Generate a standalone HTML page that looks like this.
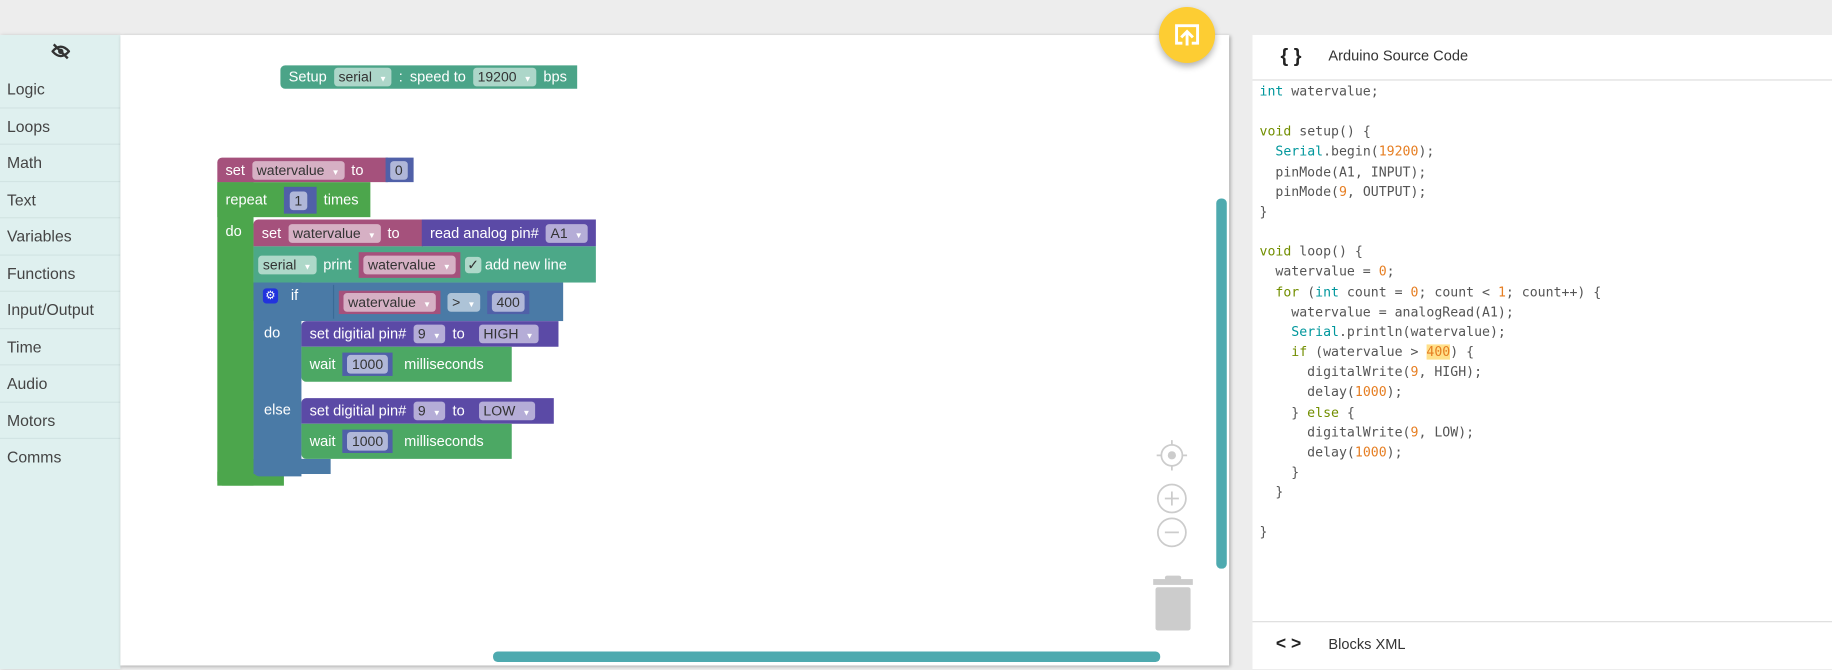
<!DOCTYPE html>
<html><head><meta charset="utf-8"><style>
html,body{margin:0;padding:0;width:1832px;height:669px;overflow:hidden;background:#ededed;}
#w{position:absolute;left:0;top:0;width:1568px;height:573px;transform:scale(1.16837,1.1675);transform-origin:0 0;font-family:"Liberation Sans",sans-serif;}
.abs{position:absolute;}
.side{left:0;top:30px;width:103px;height:543px;background:#dff0ef;box-shadow:1px 0 3px rgba(0,0,0,.15);}
.side div{height:31.5px;line-height:31.5px;padding-left:6px;font-size:13.5px;color:#444;border-bottom:1px solid #d2e4e3;box-sizing:border-box;}
.ws{left:103px;top:30px;width:949px;height:540px;background:#fff;box-shadow:1px 1px 3px rgba(0,0,0,.3);}
.b{position:absolute;color:#fff;font-size:12.5px;display:flex;align-items:center;box-sizing:border-box;padding-left:7px;white-space:nowrap;}
.b>span{margin-right:6px}
.f{background:rgba(255,255,255,.55);color:#333;border-radius:3px;padding:1px 4px;font-size:12px;}
.f i{font-style:normal;font-size:7px;color:#fff;margin-left:6px;}
.code{left:1072px;top:30px;width:496px;height:543px;background:#fff;}
pre{margin:0;position:absolute;left:6px;top:40px;font-family:"DejaVu Sans Mono","Liberation Mono",monospace;font-size:11.3px;line-height:17.15px;color:#555;}
.k{color:#00979c}.o{color:#728e00}.n{color:#e67e22}
</style></head><body><div id="w">
<div class="abs side">
<div style="height:31px;border:none;text-align:center;padding:0;line-height:28px">
<svg width="16" height="14" viewBox="0 0 16 14" style="vertical-align:middle"><path d="M1 7 Q8 -1 15 7 Q8 15 1 7Z" fill="none" stroke="#333" stroke-width="2"/><circle cx="8" cy="7" r="2.3" fill="#333"/><path d="M2 1 L14 13" stroke="#333" stroke-width="2"/></svg></div>
<div>Logic</div><div>Loops</div><div>Math</div><div>Text</div><div>Variables</div><div>Functions</div><div>Input/Output</div><div>Time</div><div>Audio</div><div>Motors</div><div style="border:none">Comms</div>
</div>
<div class="abs ws"></div>

<div class="b" style="left:240px;top:56px;width:254px;height:20px;background:#4ba488;border-radius:4px 0 0 4px">
<span>Setup</span><span class="f">serial<i>▼</i></span><span>:</span><span>speed to</span><span class="f">19200<i>▼</i></span><span>bps</span></div>

<div class="abs" style="left:186px;top:156px;width:131px;height:30px;background:#4ca64c"></div>
<div class="abs" style="left:186px;top:156px;width:31px;height:260px;background:#4ca64c;border-radius:0 0 0 5px"></div>
<div class="abs" style="left:186px;top:404px;width:57px;height:12px;background:#4ca64c"></div>
<div class="b" style="left:186px;top:160px;height:22px;background:none"><span>repeat</span></div>
<div class="b" style="left:243px;top:160px;width:28px;height:23px;background:#5060a8;padding-left:5px"><span class="f">1</span></div>
<div class="b" style="left:270px;top:160px;height:22px"><span>times</span></div>
<div class="b" style="left:186px;top:188px;height:20px"><span>do</span></div>

<div class="b" style="left:186px;top:135px;width:146px;height:21px;background:#a5517c;border-radius:4px 0 0 0"><span>set</span><span class="f">watervalue<i>▼</i></span><span>to</span></div>
<div class="b" style="left:330px;top:135px;width:24px;height:21px;background:#5060a8;padding-left:4px"><span class="f">0</span></div>

<div class="b" style="left:217px;top:188px;width:145px;height:23px;background:#a5517c;border-radius:4px 0 0 0"><span>set</span><span class="f">watervalue<i>▼</i></span><span>to</span></div>
<div class="b" style="left:361px;top:188px;width:149px;height:23px;background:#5b4aa6"><span>read analog pin#</span><span class="f">A1<i>▼</i></span></div>

<div class="b" style="left:217px;top:211px;width:293px;height:31px;background:#4ca888;padding-left:4px"><span class="f">serial<i>▼</i></span><span>print</span>
<span style="background:#a5517c;padding:4px 4px;margin-right:4px"><span class="f">watervalue<i>▼</i></span></span><span class="f" style="padding:0 2px">✓</span><span style="margin-left:-3px">add new line</span></div>

<div class="abs" style="left:217px;top:242px;width:265px;height:33px;background:#4a7aa6"></div>
<div class="abs" style="left:217px;top:242px;width:41px;height:166px;background:#4a7aa6;border-radius:0 0 0 5px"></div>
<div class="abs" style="left:217px;top:393px;width:66px;height:13px;background:#4a7aa6"></div>
<div class="abs" style="left:225px;top:247px;width:13px;height:13px;background:#2233dd;border-radius:3px;color:#fff;font-size:10px;text-align:center;line-height:13px">⚙</div>
<div class="b" style="left:242px;top:243px;height:20px"><span>if</span></div>
<div class="b" style="left:285px;top:244px;width:196px;height:29px;background:#4a7aa6;border-left:1px solid #3a6a96;padding-left:4px">
<span style="background:#a5517c;padding:3px 4px;margin-right:6px"><span class="f">watervalue<i>▼</i></span></span><span class="f">&gt;<i>▼</i></span><span style="background:#5060a8;padding:3px 4px"><span class="f">400</span></span></div>
<div class="b" style="left:219px;top:275px;height:20px"><span>do</span></div>
<div class="b" style="left:219px;top:341px;height:20px"><span>else</span></div>

<div class="b" style="left:258px;top:275px;width:220px;height:22px;background:#5b4aa6;border-radius:4px 0 0 0"><span>set digitial pin#</span><span class="f">9<i>▼</i></span><span>to</span><span style="margin-left:6px" class="f">HIGH<i>▼</i></span></div>
<div class="b" style="left:258px;top:297px;width:180px;height:30px;background:#4ca864;border-radius:0 0 0 4px"><span>wait</span><span style="background:#5060a8;padding:3px 4px;margin-right:10px"><span class="f">1000</span></span><span>milliseconds</span></div>
<div class="b" style="left:258px;top:341px;width:216px;height:22px;background:#5b4aa6;border-radius:4px 0 0 0"><span>set digitial pin#</span><span class="f">9<i>▼</i></span><span>to</span><span style="margin-left:6px" class="f">LOW<i>▼</i></span></div>
<div class="b" style="left:258px;top:363px;width:180px;height:30px;background:#4ca864;border-radius:0 0 0 4px"><span>wait</span><span style="background:#5060a8;padding:3px 4px;margin-right:10px"><span class="f">1000</span></span><span>milliseconds</span></div>

<svg class="abs" style="left:985px;top:374px" width="36" height="170" viewBox="0 0 36 170">
<g stroke="#ccc" stroke-width="1.5" fill="none">
<circle cx="18" cy="16" r="9"/><path d="M18 3v4M18 25v4M5 16h4M27 16h4"/>
<circle cx="18" cy="53" r="12"/><path d="M12 53h12M18 47v12"/>
<circle cx="18" cy="82" r="12"/><path d="M12 82h12"/></g>
<circle cx="18" cy="16" r="3.5" fill="#ccc"/>
<rect x="2" y="122" width="34" height="5" fill="#ccc"/><rect x="12" y="119" width="14" height="4" rx="2" fill="#ccc"/>
<rect x="4" y="129" width="30" height="37" rx="2" fill="#ccc"/>
</svg>
<div class="abs" style="left:1041px;top:170px;width:9px;height:317px;background:#4eaaaf;border-radius:4px"></div>
<div class="abs" style="left:422px;top:558px;width:571px;height:9px;background:#4eaaaf;border-radius:4px"></div>
<div class="abs" style="left:992px;top:6px;width:48px;height:48px;border-radius:50%;background:#fdcd33;box-shadow:0 3px 6px rgba(0,0,0,.3)"></div>
<svg class="abs" style="left:1005px;top:20px" width="22" height="20" viewBox="0 0 22 20"><path d="M7 17H2V2h18v15h-5" stroke="#fff" stroke-width="2.5" fill="none"/><path d="M11 19V8M6 12l5-5 5 5" stroke="#fff" stroke-width="2.5" fill="none"/></svg>

<div class="abs code">
<div class="abs" style="left:0;top:0;width:496px;height:38px;border-bottom:1px solid #ddd"></div>
<div class="abs" style="left:24px;top:8px;font-size:17px;color:#222;font-weight:bold">{ }</div>
<div class="abs" style="left:65px;top:11px;font-size:12.5px;color:#333">Arduino Source Code</div>
<pre><span class="k">int</span> watervalue;

<span class="o">void</span> setup() {
  <span class="k">Serial</span>.begin(<span class="n">19200</span>);
  pinMode(A1, INPUT);
  pinMode(<span class="n">9</span>, OUTPUT);
}

<span class="o">void</span> loop() {
  watervalue = <span class="n">0</span>;
  <span class="o">for</span> (<span class="k">int</span> count = <span class="n">0</span>; count &lt; <span class="n">1</span>; count++) {
    watervalue = analogRead(A1);
    <span class="k">Serial</span>.println(watervalue);
    <span class="o">if</span> (watervalue &gt; <span class="n" style="background:#ffe08a">400</span>) {
      digitalWrite(<span class="n">9</span>, HIGH);
      delay(<span class="n">1000</span>);
    } <span class="o">else</span> {
      digitalWrite(<span class="n">9</span>, LOW);
      delay(<span class="n">1000</span>);
    }
  }

}</pre>
<div class="abs" style="left:0;top:502px;width:496px;height:41px;border-top:1px solid #ddd"></div>
<div class="abs" style="left:20px;top:513px;font-size:15px;color:#222;font-weight:bold">&lt; &gt;</div>
<div class="abs" style="left:65px;top:515px;font-size:12.5px;color:#333">Blocks XML</div>
</div>
</div></body></html>
